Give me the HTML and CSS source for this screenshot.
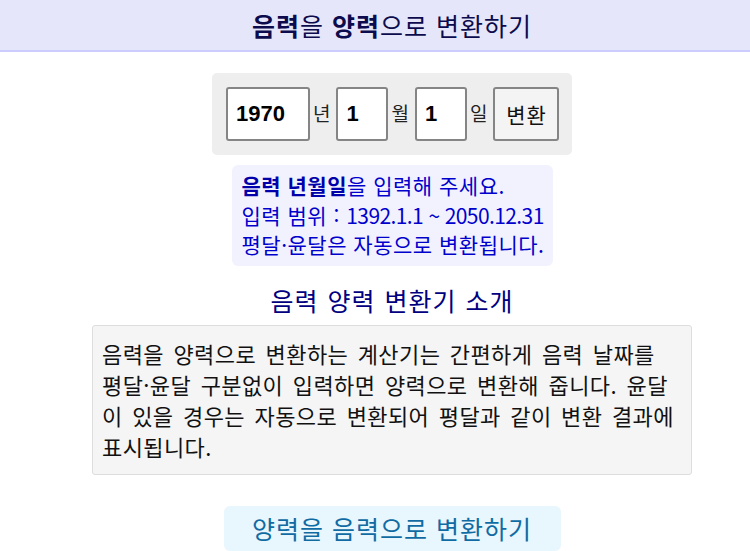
FILE: index.html
```html
<!DOCTYPE html>
<html lang="ko">

<head>
  <meta charset="UTF-8" />
  <meta name="viewport" content="width=device-width, initial-scale=1.0" />
  <title>음력을 양력으로 변환하기</title>
  <link rel="stylesheet" href="styles.css">
</head>

<body>
  <div class="top">
    <h1 class="title"><b>음력</b>을 <b>양력</b>으로 변환하기</h1>
  </div>

  <div class="page">
    <form class="convert-box" onsubmit="return false;">
      <input type="text" class="num year" value="1970" />
      <span class="unit">년</span>
      <input type="text" class="num" value="1" />
      <span class="unit">월</span>
      <input type="text" class="num" value="1" />
      <span class="unit">일</span>
      <button class="btn">변환</button>
    </form>

    <div class="notice">
      <b>음력 년월일</b>을 입력해 주세요.<br>
      입력 범위 : <span class="range">1392.1.1 ~ 2050.12.31</span><br>
      평달·윤달은 자동으로 변환됩니다.
    </div>

    <h2 class="intro-title">음력 양력 변환기 소개</h2>
    <div class="intro-box">
      음력을 양력으로 변환하는 계산기는 간편하게 음력 날짜를 평달·윤달 구분없이 입력하면 양력으로 변환해 줍니다. 윤달이 있을 경우는 자동으로 변환되어 평달과 같이 변환 결과에 표시됩니다.
    </div>

    <a href="#" class="switch-link">양력을 음력으로 변환하기</a>
  </div>
</body>

</html>
```

FILE: styles.css
```css
body {
  margin: 0;
  font-family: "Noto Sans CJK KR", "Noto Sans", sans-serif;
  background-color: #fff;
  color: #111;
}

.top {
  background-color: #e6e6fa;
  border-bottom: 2px solid #ccccff;
  height: 50px;
  padding-left: 34px;
  display: flex;
  align-items: center;
  justify-content: center;
}

.title {
  margin: 0;
  font-size: 25px;
  line-height: 30px;
  letter-spacing: 1px;
  font-weight: normal;
  color: #0b0b4d;
}

.page {
  padding-left: 34px;
  display: flex;
  flex-direction: column;
  align-items: center;
}

.convert-box {
  margin-top: 21px;
  width: 360px;
  box-sizing: border-box;
  padding: 14px;
  background-color: #eeeeee;
  border-radius: 5px;
  display: flex;
  align-items: center;
}

.convert-box > * {
  flex-shrink: 0;
}

.num {
  box-sizing: border-box;
  width: 52px;
  height: 54px;
  padding: 0 8px;
  border: 2px solid #858585;
  border-radius: 3px;
  font-family: "Liberation Sans", Arial, sans-serif;
  font-size: 22px;
  font-weight: bold;
  color: #000;
}

.num.year {
  width: 84px;
}

.unit {
  margin: 0 6px 4px 3px;
  font-size: 19px;
  color: #222;
}

.btn {
  box-sizing: border-box;
  width: 66px;
  height: 54px;
  border: 2px solid #858585;
  border-radius: 3px;
  background-color: #f4f4f4;
  font-family: "Noto Sans CJK KR", sans-serif;
  font-size: 21px;
  letter-spacing: 1px;
  color: #111;
  cursor: pointer;
}

.notice {
  margin-top: 10px;
  width: 321px;
  box-sizing: border-box;
  padding: 6px 10px;
  background-color: #f2f2ff;
  border-radius: 6px;
  font-size: 21px;
  line-height: 29.5px;
  letter-spacing: 0.5px;
  white-space: nowrap;
  color: #0000cc;
}

.notice b {
  color: #0000aa;
}

.notice .range {
  letter-spacing: -0.6px;
}

.intro-title {
  margin: 19px 0 10px;
  font-size: 25px;
  line-height: 30px;
  letter-spacing: 1px;
  word-spacing: 1px;
  font-weight: normal;
  color: #000080;
}

.intro-box {
  width: 600px;
  box-sizing: border-box;
  padding: 12px 14px 12px 9px;
  background-color: #f5f5f5;
  border: 1px solid #dddddd;
  border-radius: 3px;
  font-size: 22px;
  line-height: 31px;
  letter-spacing: 0.4px;
  word-spacing: 3px;
}

.switch-link {
  margin-top: 31px;
  width: 337px;
  height: 45px;
  display: flex;
  align-items: center;
  justify-content: center;
  background-color: #e8f6fd;
  border-radius: 6px;
  font-size: 25px;
  letter-spacing: 1px;
  color: #106ba3;
  text-decoration: none;
}
```
